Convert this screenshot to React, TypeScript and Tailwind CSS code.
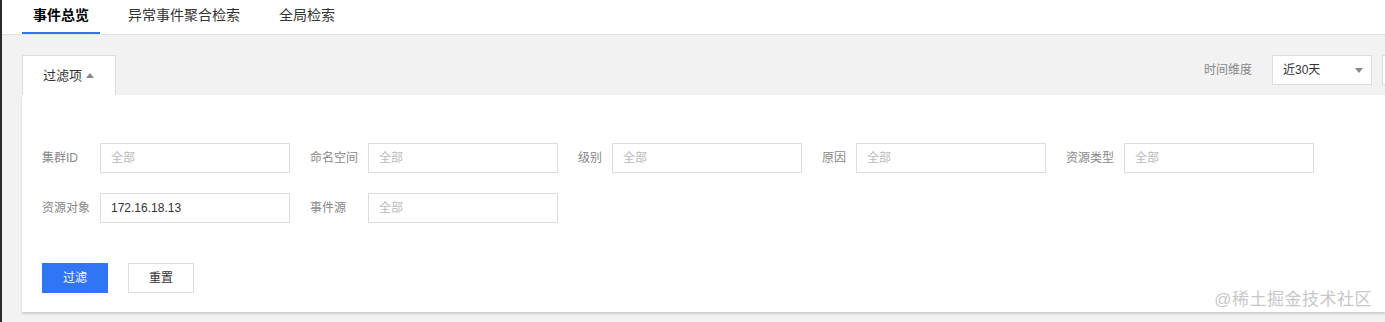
const font = { fontFamily: '"Liberation Sans", "Noto Sans CJK SC", sans-serif' };

const tabs = ["事件总览", "异常事件聚合检索", "全局检索"];

interface FieldProps {
  label: string;
  labelWidth: string;
  value?: string;
}

const Field: React.FC<FieldProps> = ({ label, labelWidth, value }) => (
  <div className="flex items-center">
    <span className={`${labelWidth} shrink-0 text-[12px] text-[#888]`}>{label}</span>
    <div className="flex h-[30px] w-[190px] items-center border border-[#ddd] bg-white px-[10px] text-[12px]">
      {value ? (
        <span className="text-[#333]">{value}</span>
      ) : (
        <span className="text-[#bbb]">全部</span>
      )}
    </div>
  </div>
);

export default function App() {
  return (
    <div className="relative flex h-[322px] w-full overflow-hidden bg-[#f2f2f2]" style={font}>
      <div className="w-[2px] shrink-0 bg-[#2b2b2b]" />
      <div className="flex min-w-0 flex-1 flex-col">
        <header className="flex h-[35px] shrink-0 gap-[17px] border-b border-[#e2e2e2] bg-white pl-[20px]">
          {tabs.map((t, i) => (
            <div
              key={t}
              className={`flex h-full items-center px-[11px] pb-[1px] text-[14px] ${
                i === 0
                  ? "border-b-2 border-[#2f75f5] font-bold text-[#000]"
                  : "border-b-2 border-transparent text-[#333]"
              }`}
            >
              {t}
            </div>
          ))}
        </header>

        <div className="flex flex-1 flex-col pl-[20px] pt-[20px]">
          <div className="flex h-[40px] items-start">
            <div className="flex h-[40px] w-[94px] items-center border border-b-0 border-[#ddd] bg-white pl-[20px] text-[13px] text-[#333]">
              过滤项
              <svg width="8" height="5" viewBox="0 0 8 5" className="ml-[4px]">
                <path d="M4 0 L8 5 L0 5 Z" fill="#888" />
              </svg>
            </div>
            <div className="-mr-[27px] ml-auto flex items-center">
              <span className="mr-[20px] text-[12px] text-[#888]">时间维度</span>
              <div className="flex h-[30px] w-[100px] items-center justify-between border border-[#ddd] bg-white pl-[10px] pr-[8px] text-[12px] text-[#333]">
                近30天
                <svg width="8" height="5" viewBox="0 0 8 5">
                  <path d="M0 0 L8 0 L4 5 Z" fill="#888" />
                </svg>
              </div>
              <div className="ml-[10px] h-[30px] w-[30px] border border-[#ddd] bg-white" />
            </div>
          </div>

          <section className="flex flex-col bg-white pb-[19px] pl-[20px] pt-[48px] shadow-[0_2px_2px_rgba(0,0,0,0.15)]">
            <div className="flex gap-[20px]">
              <Field label="集群ID" labelWidth="w-[58px]" />
              <Field label="命名空间" labelWidth="w-[58px]" />
              <Field label="级别" labelWidth="w-[34px]" />
              <Field label="原因" labelWidth="w-[34px]" />
              <Field label="资源类型" labelWidth="w-[58px]" />
            </div>
            <div className="mt-[20px] flex gap-[20px]">
              <Field label="资源对象" labelWidth="w-[58px]" value="172.16.18.13" />
              <Field label="事件源" labelWidth="w-[58px]" />
            </div>
            <div className="mt-[40px] flex gap-[20px]">
              <button className="h-[30px] w-[66px] bg-[#2f75f5] text-[12px] text-white">过滤</button>
              <button className="h-[30px] w-[66px] border border-[#ddd] bg-white text-[12px] text-[#333]">
                重置
              </button>
            </div>
          </section>
        </div>
      </div>

      <div className="absolute bottom-[10px] right-[13px] text-[17px] tracking-[0.5px] text-[#c8c8c8]">
        @稀土掘金技术社区
      </div>
    </div>
  );
}
